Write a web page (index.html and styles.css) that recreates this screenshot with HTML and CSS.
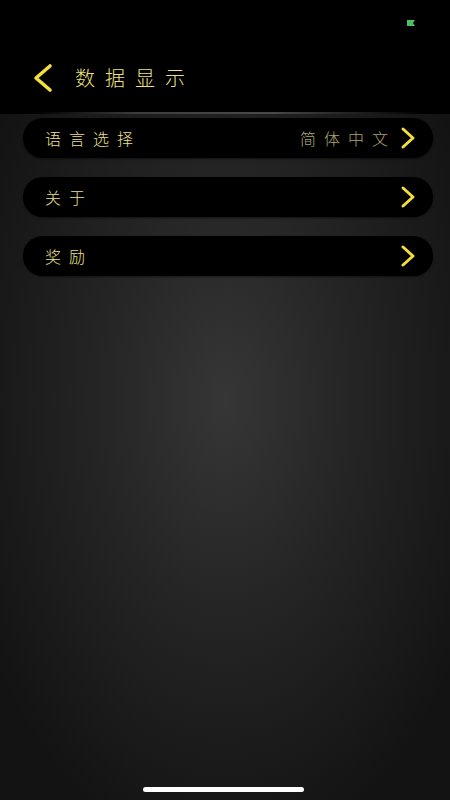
FILE: index.html
```html
<!DOCTYPE html>
<html lang="zh-CN">
<head>
<meta charset="utf-8">
<title>数据显示</title>
<link rel="stylesheet" href="styles.css">
</head>
<body>
<div class="screen">
  <header class="header">
    <div class="status">
      <svg class="status-icon" width="8" height="6" viewBox="0 0 8 6"><path d="M0 0H8L6 3L8 6H0Z" fill="#4cc064"/></svg>
    </div>
    <div class="nav">
      <svg class="back" width="22" height="30" viewBox="0 0 22 30"><polyline points="18,3 4,15 18,27" fill="none" stroke="#f2de3c" stroke-width="3.6" stroke-linecap="round" stroke-linejoin="round"/></svg>
      <h1 class="title">数据显示</h1>
    </div>
    <div class="divider"></div>
  </header>
  <main class="list">
    <div class="row">
      <span class="label">语言选择</span>
      <span class="right">
        <span class="value">简体中文</span>
        <svg class="chev" width="16" height="24" viewBox="0 0 16 24"><polyline points="3,3 13,12 3,21" fill="none" stroke="#f2de3c" stroke-width="3" stroke-linecap="round" stroke-linejoin="round"/></svg>
      </span>
    </div>
    <div class="row">
      <span class="label">关于</span>
      <span class="right">
        <svg class="chev" width="16" height="24" viewBox="0 0 16 24"><polyline points="3,3 13,12 3,21" fill="none" stroke="#f2de3c" stroke-width="3" stroke-linecap="round" stroke-linejoin="round"/></svg>
      </span>
    </div>
    <div class="row">
      <span class="label">奖励</span>
      <span class="right">
        <svg class="chev" width="16" height="24" viewBox="0 0 16 24"><polyline points="3,3 13,12 3,21" fill="none" stroke="#f2de3c" stroke-width="3" stroke-linecap="round" stroke-linejoin="round"/></svg>
      </span>
    </div>
  </main>
  <div class="home-indicator"></div>
</div>
</body>
</html>
```

FILE: styles.css
```css
html, body {
  margin: 0;
  padding: 0;
}
body {
  width: 450px;
  height: 800px;
  overflow: hidden;
  font-family: "Noto Sans CJK SC", "Noto Sans", sans-serif;
  background: #121212;
}
.screen {
  position: relative;
  width: 450px;
  height: 800px;
  background: radial-gradient(ellipse 62% 58% at 50% 50%, #363636 0%, #252525 45%, #131313 100%);
  display: flex;
  flex-direction: column;
}
.header {
  background: #000;
  display: flex;
  flex-direction: column;
}
.status {
  height: 44px;
  display: flex;
  justify-content: flex-end;
  align-items: flex-start;
  padding-right: 35px;
}
.status-icon {
  margin-top: 20px;
}
.nav {
  height: 68px;
  display: flex;
  align-items: center;
  padding-left: 32px;
}
.back {
  display: block;
  margin-top: -1px;
}
.title {
  margin: 0 0 0 21px;
  font-size: 20px;
  font-weight: 300;
  letter-spacing: 10px;
  color: #efe07c;
  line-height: 1;
}
.divider {
  height: 2px;
  background: linear-gradient(90deg, rgba(80,80,80,0) 8%, #3c3c3c 30%, #4a4a4a 60%, rgba(80,80,80,0) 94%);
}
.list {
  display: flex;
  flex-direction: column;
  gap: 19px;
  padding: 4px 17px 0 23px;
}
.row {
  height: 40px;
  border-radius: 20px;
  background: #000;
  display: flex;
  align-items: center;
  justify-content: space-between;
  padding: 0 17px 0 22px;
  box-shadow: 0 1px 2px rgba(0,0,0,0.5);
}
.label {
  font-size: 16px;
  font-weight: 300;
  letter-spacing: 8px;
  color: #ece08e;
  line-height: 1;
}
.right {
  display: flex;
  align-items: center;
}
.value {
  font-size: 16px;
  font-weight: 300;
  letter-spacing: 8px;
  color: #aaa274;
  line-height: 1;
  margin-right: 4px;
}
.chev {
  display: block;
}
.home-indicator {
  position: absolute;
  left: 143px;
  bottom: 8px;
  width: 161px;
  height: 5px;
  border-radius: 3px;
  background: #fff;
}
```
